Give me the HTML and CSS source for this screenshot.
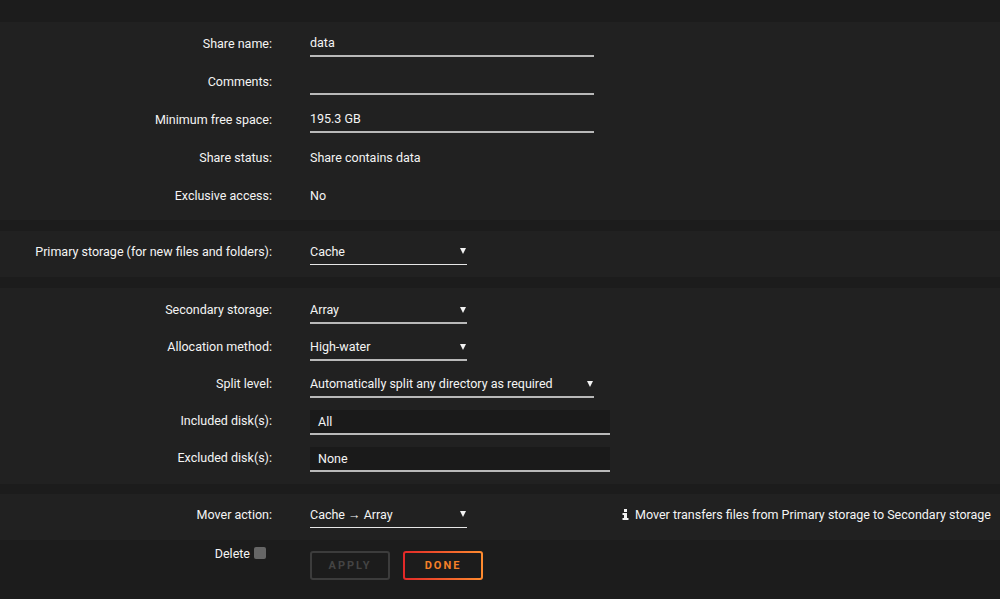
FILE: index.html
```html
<!DOCTYPE html>
<html lang="en">
<head>
    <meta charset="UTF-8">
    <meta name="viewport" content="width=device-width, initial-scale=1.0">
    <title>Share Settings</title>
    <link rel="stylesheet" href="styles.css">
</head>
<body>

    <div class="topbar"></div>

    <form class="share-form" id="shareForm">
        <!-- General -->
        <div class="section general">
            <div class="row">
                <label class="label" for="shareName">Share name:</label>
                <div class="value"><input class="text-input" type="text" id="shareName" value="data"></div>
            </div>
            <div class="row">
                <label class="label" for="comments">Comments:</label>
                <div class="value"><input class="text-input" type="text" id="comments" value=""></div>
            </div>
            <div class="row">
                <label class="label" for="freeSpace">Minimum free space:</label>
                <div class="value"><input class="text-input" type="text" id="freeSpace" value="195.3 GB"></div>
            </div>
            <div class="row">
                <span class="label">Share status:</span>
                <div class="value">Share contains data</div>
            </div>
            <div class="row">
                <span class="label">Exclusive access:</span>
                <div class="value">No</div>
            </div>
        </div>

        <!-- Primary storage -->
        <div class="section">
            <div class="row">
                <label class="label" for="primary">Primary storage (for new files and folders):</label>
                <div class="value">
                    <span class="select-wrap">
                        <select class="select bright" id="primary">
                            <option>Cache</option>
                            <option>Array</option>
                        </select>
                    </span>
                </div>
            </div>
        </div>

        <!-- Secondary storage -->
        <div class="section compact">
            <div class="row">
                <label class="label" for="secondary">Secondary storage:</label>
                <div class="value">
                    <span class="select-wrap">
                        <select class="select" id="secondary">
                            <option>Array</option>
                            <option>None</option>
                        </select>
                    </span>
                </div>
            </div>
            <div class="row">
                <label class="label" for="allocation">Allocation method:</label>
                <div class="value">
                    <span class="select-wrap">
                        <select class="select" id="allocation">
                            <option>High-water</option>
                            <option>Most-free</option>
                            <option>Fill-up</option>
                        </select>
                    </span>
                </div>
            </div>
            <div class="row">
                <label class="label" for="split">Split level:</label>
                <div class="value">
                    <span class="select-wrap wide">
                        <select class="select" id="split">
                            <option>Automatically split any directory as required</option>
                        </select>
                    </span>
                </div>
            </div>
            <div class="row">
                <span class="label">Included disk(s):</span>
                <div class="value"><div class="disk-box">All</div></div>
            </div>
            <div class="row">
                <span class="label">Excluded disk(s):</span>
                <div class="value"><div class="disk-box">None</div></div>
            </div>
        </div>

        <!-- Mover -->
        <div class="section last">
            <div class="row">
                <label class="label" for="mover">Mover action:</label>
                <div class="value mover">
                    <span class="select-wrap">
                        <select class="select bright" id="mover">
                            <option>Cache &rarr; Array</option>
                            <option>Array &rarr; Cache</option>
                        </select>
                    </span>
                    <span class="hint">
                        <svg class="info-icon" width="7" height="11" viewBox="0 0 7 11">
                            <rect x="2" y="0" width="3" height="3" fill="#f2f2f2"/>
                            <path d="M0.5 4h4.5v5h1.5v2h-6v-2h1.5v-3h-1.5z" fill="#f2f2f2"/>
                        </svg>
                        Mover transfers files from Primary storage to Secondary storage
                    </span>
                </div>
            </div>
        </div>

        <!-- Buttons -->
        <div class="actions">
            <label class="delete" for="deleteShare">Delete <input type="checkbox" id="deleteShare"></label>
            <div class="buttons">
                <button type="button" class="btn" disabled>Apply</button>
                <button type="button" class="btn done">Done</button>
            </div>
        </div>
    </form>

</body>
</html>
```

FILE: styles.css
```css
body {
    margin: 0;
    background-color: #1c1c1c;
    color: #f4f4f4;
    font-family: Roboto, "Noto Sans", sans-serif;
    font-size: 12.5px;
}

.topbar {
    height: 22px;
}

.section {
    background-color: #212121;
    padding: 1px 0 7px;
    margin-bottom: 11px;
}

.section.general {
    padding: 2px 0 6px;
}

.section.compact {
    padding: 3px 0 8px;
    margin-bottom: 10px;
}

.section.last {
    margin-bottom: 0;
}

.row {
    display: grid;
    grid-template-columns: 272px 1fr;
    column-gap: 38px;
    align-items: center;
    height: 38px;
}

.compact .row {
    height: 37px;
}

.label {
    text-align: right;
}

.value {
    display: flex;
    align-items: center;
}

.text-input {
    width: 284px;
    height: 28px;
    padding: 0;
    background: transparent;
    border: none;
    border-bottom: 2px solid #b9b9b9;
    color: #f4f4f4;
    font-family: inherit;
    font-size: 12.5px;
    box-sizing: border-box;
    outline: none;
}

.select-wrap {
    position: relative;
    display: inline-block;
    width: 157px;
}

.select-wrap.wide {
    width: 284px;
}

.select-wrap::after {
    content: "";
    position: absolute;
    right: 1px;
    top: 11px;
    border-left: 3px solid transparent;
    border-right: 3px solid transparent;
    border-top: 6px solid #f2f2f2;
    pointer-events: none;
}

.select {
    -webkit-appearance: none;
    appearance: none;
    width: 100%;
    height: 28px;
    padding: 2px 0 0;
    background: transparent;
    border: none;
    border-bottom: 2px solid #b9b9b9;
    border-radius: 0;
    box-sizing: border-box;
    color: #f4f4f4;
    font-family: inherit;
    font-size: 12.5px;
    outline: none;
}

.select.bright {
    border-bottom: 1px solid #e6e6e6;
}

.disk-box {
    width: 300px;
    height: 25px;
    line-height: 23px;
    padding-left: 8px;
    margin-top: 3px;
    background-color: #1a1a1a;
    border-bottom: 2px solid #b9b9b9;
    box-sizing: border-box;
}

.mover {
    justify-content: space-between;
    padding-right: 9px;
}

.hint {
    display: flex;
    align-items: center;
    gap: 6px;
}

.actions {
    display: grid;
    grid-template-columns: 272px 1fr;
    column-gap: 38px;
    padding-top: 4px;
}

.delete {
    display: flex;
    align-items: center;
    justify-content: flex-end;
    gap: 4px;
    padding-right: 6px;
    height: 18px;
}

.delete input {
    -webkit-appearance: none;
    appearance: none;
    width: 12px;
    height: 12px;
    margin: 0;
    background-color: #666;
    border-radius: 2px;
}

.buttons {
    display: flex;
    gap: 13px;
    padding-top: 7px;
}

.btn {
    width: 80px;
    height: 29px;
    background: transparent;
    border: 2px solid #3c3c3c;
    border-radius: 3px;
    color: #444;
    font-family: inherit;
    font-size: 11px;
    font-weight: bold;
    letter-spacing: 2px;
    text-transform: uppercase;
    cursor: pointer;
}

.btn.done {
    border: 2px solid transparent;
    background: linear-gradient(#1c1c1c, #1c1c1c) padding-box,
                linear-gradient(90deg, #e22828, #ff8c2f) border-box;
    color: #f58028;
}
```
